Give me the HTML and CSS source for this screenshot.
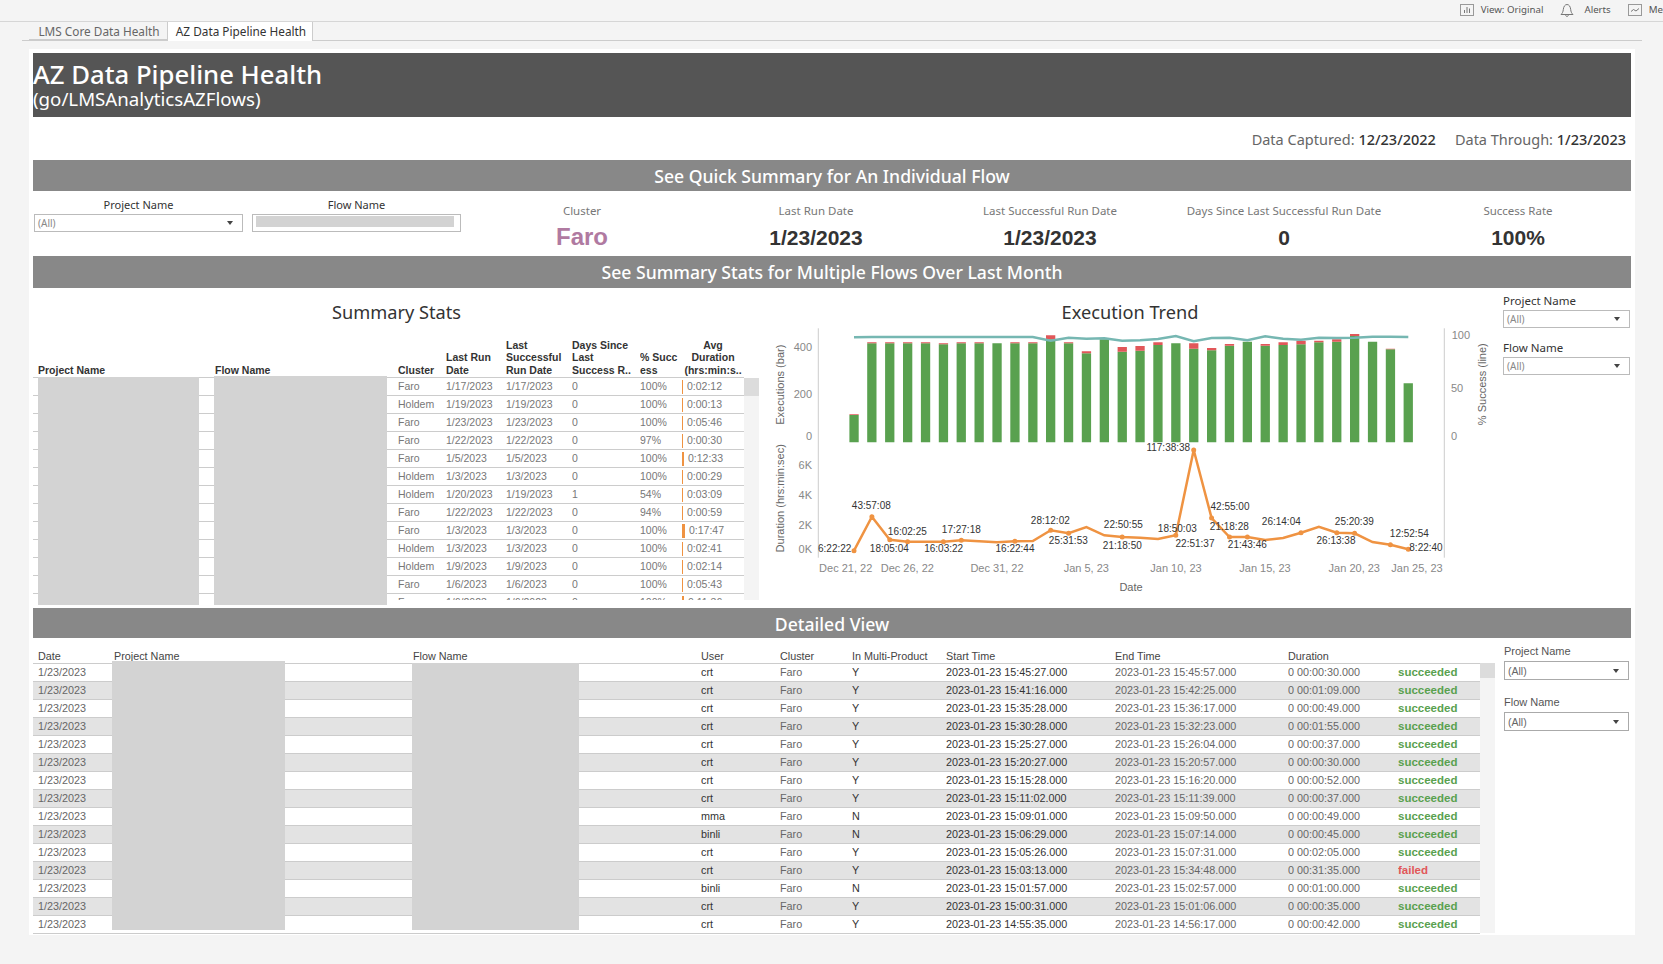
FILE: index.html
```html
<!DOCTYPE html>
<html lang="en">
<head>
    <meta charset="UTF-8">
    <title>AZ Data Pipeline Health</title>
    <link rel="stylesheet" href="styles.css">
</head>
<body>

    <div class="toolbar">
        <div class="tool">
            <svg width="14" height="12" viewBox="0 0 14 12"><rect x="0.5" y="0.5" width="13" height="11" fill="none" stroke="#999"/><path d="M4.5 9V6M7 9V3M9.5 9V4.5" stroke="#777" fill="none"/></svg>
            <span>View: Original</span>
        </div>
        <div class="tool tool-wide">
            <svg width="14" height="14" viewBox="0 0 14 14"><path d="M1 11.5c1.5-1.5 2-2.500 2.300-5C3.600 3.500 5 1.500 7 1.500s3.400 2 3.700 5c.3 2.500.8 3.500 2.300 5zM5.500 11.500c.2 1.300.8 2 1.500 2s1.300-.7 1.500-2" fill="none" stroke="#777"/></svg>
            <span>Alerts</span>
        </div>
        <div class="tool">
            <svg width="14" height="12" viewBox="0 0 14 12"><rect x="0.5" y="0.5" width="13" height="11" fill="none" stroke="#999"/><path d="M3 7.500l2.500-2 2.500 1.500 3-2.500" stroke="#777" fill="none"/></svg>
            <span>Me</span>
        </div>
    </div>

    <div class="tabs">
        <div class="tab">LMS Core Data Health</div>
        <div class="tab tab-active">AZ Data Pipeline Health</div>
    </div>

    <div class="dashboard">
        <div class="page-header">
            <h1>AZ Data Pipeline Health</h1>
            <div class="page-sub">(go/LMSAnalyticsAZFlows)</div>
        </div>

        <div class="meta">
            <span>Data Captured: <b>12/23/2022</b></span>
            <span>Data Through: <b>1/23/2023</b></span>
        </div>

        <div class="section-bar section-bar-first">See Quick Summary for An Individual Flow</div>

        <div class="quick">
            <div class="quick-filters">
                <div class="filter">
                    <div class="filter-label">Project Name</div>
                    <div class="dropdown"><span>(All)</span><i class="caret"></i></div>
                </div>
                <div class="filter">
                    <div class="filter-label">Flow Name</div>
                    <div class="dropdown dropdown-redacted"><span class="redact-inner"></span></div>
                </div>
            </div>
            <div class="stat">
                <div class="stat-label">Cluster</div>
                <div class="stat-value stat-pink">Faro</div>
            </div>
            <div class="stat">
                <div class="stat-label">Last Run Date</div>
                <div class="stat-value">1/23/2023</div>
            </div>
            <div class="stat">
                <div class="stat-label">Last Successful Run Date</div>
                <div class="stat-value">1/23/2023</div>
            </div>
            <div class="stat">
                <div class="stat-label">Days Since Last Successful Run Date</div>
                <div class="stat-value">0</div>
            </div>
            <div class="stat">
                <div class="stat-label">Success Rate</div>
                <div class="stat-value">100%</div>
            </div>
        </div>

        <div class="section-bar section-bar-tall">See Summary Stats for Multiple Flows Over Last Month</div>

        <div class="summary">
            <div class="summary-left">
                <h3 class="panel-title">Summary Stats</h3>
                <div class="summary-table-box">
                    <div class="summary-clip">
                        <table class="grid-table summary-table">
                            <colgroup>
                                <col class="s1"><col class="s2"><col class="s3"><col class="s4"><col class="s5"><col class="s6"><col class="s7"><col class="s8">
                            </colgroup>
                            <thead>
                                <tr>
                                    <th>Project Name</th>
                                    <th>Flow Name</th>
                                    <th>Cluster</th>
                                    <th>Last Run<br>Date</th>
                                    <th>Last<br>Successful<br>Run Date</th>
                                    <th>Days Since<br>Last<br>Success R..</th>
                                    <th>% Succ<br>ess</th>
                                    <th class="th-center">Avg<br>Duration<br>(hrs:min:s..</th>
                                </tr>
                            </thead>
                            <tbody>
                                <tr><td></td><td></td><td>Faro</td><td>1/17/2023</td><td>1/17/2023</td><td>0</td><td>100%</td><td><span class="dur-bar" style="width:1px"></span>0:02:12</td></tr>
                                <tr><td></td><td></td><td>Holdem</td><td>1/19/2023</td><td>1/19/2023</td><td>0</td><td>100%</td><td><span class="dur-bar" style="width:1px"></span>0:00:13</td></tr>
                                <tr><td></td><td></td><td>Faro</td><td>1/23/2023</td><td>1/23/2023</td><td>0</td><td>100%</td><td><span class="dur-bar" style="width:1px"></span>0:05:46</td></tr>
                                <tr><td></td><td></td><td>Faro</td><td>1/22/2023</td><td>1/22/2023</td><td>0</td><td>97%</td><td><span class="dur-bar" style="width:1px"></span>0:00:30</td></tr>
                                <tr><td></td><td></td><td>Faro</td><td>1/5/2023</td><td>1/5/2023</td><td>0</td><td>100%</td><td><span class="dur-bar" style="width:2px"></span>0:12:33</td></tr>
                                <tr><td></td><td></td><td>Holdem</td><td>1/3/2023</td><td>1/3/2023</td><td>0</td><td>100%</td><td><span class="dur-bar" style="width:1px"></span>0:00:29</td></tr>
                                <tr><td></td><td></td><td>Holdem</td><td>1/20/2023</td><td>1/19/2023</td><td>1</td><td>54%</td><td><span class="dur-bar" style="width:1px"></span>0:03:09</td></tr>
                                <tr><td></td><td></td><td>Faro</td><td>1/22/2023</td><td>1/22/2023</td><td>0</td><td>94%</td><td><span class="dur-bar" style="width:1px"></span>0:00:59</td></tr>
                                <tr><td></td><td></td><td>Faro</td><td>1/3/2023</td><td>1/3/2023</td><td>0</td><td>100%</td><td><span class="dur-bar" style="width:3px"></span>0:17:47</td></tr>
                                <tr><td></td><td></td><td>Holdem</td><td>1/3/2023</td><td>1/3/2023</td><td>0</td><td>100%</td><td><span class="dur-bar" style="width:1px"></span>0:02:41</td></tr>
                                <tr><td></td><td></td><td>Holdem</td><td>1/9/2023</td><td>1/9/2023</td><td>0</td><td>100%</td><td><span class="dur-bar" style="width:1px"></span>0:02:14</td></tr>
                                <tr><td></td><td></td><td>Faro</td><td>1/6/2023</td><td>1/6/2023</td><td>0</td><td>100%</td><td><span class="dur-bar" style="width:1px"></span>0:05:43</td></tr>
                                <tr><td></td><td></td><td>Faro</td><td>1/6/2023</td><td>1/6/2023</td><td>0</td><td>100%</td><td><span class="dur-bar" style="width:2px"></span>0:11:36</td></tr>
                            </tbody>
                        </table>
                    </div>
                    <div class="scroll-track summary-scroll"><div class="scroll-thumb"></div></div>
                    <div class="redact redact-s1"></div>
                    <div class="redact redact-s2"></div>
                </div>
            </div>

            <div class="summary-chart">
                <h3 class="panel-title">Execution Trend</h3>
                <svg class="trend" width="740" height="280" viewBox="0 40 740 280">
                    <path class="axis" d="M58.3 40.300V269.700M684.300 40.300V269.700"/>

                    <path class="bars-green" d="M89.4 127h9.300v27.300h-9.300zM107.200 55.300h9.300v99h-9.300zM125.100 55.300h9.300v99h-9.300zM143 55.300h9.300v99h-9.300zM160.900 55.300h9.300v99h-9.300zM178.800 56.300h9.300v98h-9.300zM196.600 55.300h9.300v99h-9.300zM214.500 55.300h9.300v99h-9.300zM232.400 55.300h9.300v99h-9.300zM250.300 55.300h9.300v99h-9.300zM268.200 55.300h9.300v99h-9.300zM286 51.300h9.300v103h-9.300zM303.900 55.300h9.300v99h-9.300zM321.800 65.300h9.300v89h-9.300zM339.700 51.300h9.300v103h-9.300zM357.600 63.700h9.300v90.600h-9.300zM375.400 62.700h9.300v91.600h-9.300zM393.300 57h9.300v97.300h-9.300zM411.200 55.300h9.300v99h-9.300zM429.100 60.700h9.300v93.600h-9.300zM447 62.300h9.300v92h-9.300zM464.800 57.700h9.300v96.600h-9.300zM482.700 53.700h9.300v100.600h-9.300zM500.600 57.700h9.300v96.600h-9.300zM518.500 57h9.300v97.300h-9.300zM536.400 56.300h9.300v98h-9.300zM554.200 54.300h9.300v100h-9.300zM572.100 53.700h9.300v100.600h-9.300zM590 48h9.300v106.300h-9.300zM607.900 53.700h9.300v100.600h-9.300zM625.800 61.300h9.300v93h-9.300zM643.600 95.300h9.300v59h-9.300z"/>
                    <path class="bars-red" d="M89.4 126.300h9.300v.7h-9.300zM107.200 54.300h9.300v1h-9.300zM125.100 54.300h9.300v1h-9.300zM143 54.300h9.300v1h-9.300zM160.900 54.300h9.300v1h-9.300zM178.800 55.300h9.300v1h-9.300zM196.600 54.300h9.300v1h-9.300zM214.500 54.300h9.300v1h-9.300zM250.300 54.300h9.300v1h-9.300zM268.200 54.300h9.300v1h-9.300zM286 47.300h9.300v4h-9.300zM303.900 54.300h9.300v1h-9.300zM321.800 63.300h9.300v2h-9.300zM357.600 59h9.300v4.700h-9.300zM375.400 58h9.300v4.700h-9.300zM393.300 54.300h9.300v2.700h-9.300zM429.100 55.300h9.300v5.400h-9.300zM447 60h9.300v2.300h-9.300zM464.800 56h9.300v1.700h-9.300zM500.600 56h9.300v1.700h-9.300zM518.500 54.300h9.300v2.700h-9.300zM536.400 52.700h9.300v3.600h-9.300zM554.200 52.700h9.300v1.600h-9.300zM572.100 51.300h9.300v2.400h-9.300zM590 46h9.300v2h-9.300zM625.800 60.700h9.300v.6h-9.300z"/>
                    <polyline class="line-teal" points="94,49.300 111.900,49 129.800,49 147.600,49 165.500,49 183.400,49 201.300,49 219.200,49 237,49 254.900,49 272.800,49 290.700,52.700 308.600,49.700 326.400,50.700 344.300,50.300 362.200,52.700 380.100,52.300 398,51 415.800,48 433.700,53.300 451.600,50 469.500,49.700 487.400,52.300 505.200,48.300 523.100,50.700 541,51.700 558.900,49.700 576.800,50 594.600,49.700 612.500,48.700 630.400,48.700 648.300,49"/>

                    <polyline class="line-orange" points="94,262.700 111.900,228.700 129.800,251.700 147.600,253.700 165.500,253.700 183.400,253.700 201.300,252.300 219.200,253.300 237,254.300 254.900,253.300 272.800,253 290.700,242.300 308.600,245.300 326.400,239 344.300,247.300 362.200,249 380.100,249.700 398,251 415.800,247.300 433.700,162 451.600,230 469.500,249 487.400,249 505.200,252 523.100,250 541,244.700 558.900,238.700 576.800,244.700 594.600,245.300 612.500,254 630.400,256.700 648.300,261.300"/>
                    <path class="dots-orange" d="M94 262.700h0M111.900 228.700h0M129.800 251.700h0M147.600 253.700h0M183.400 253.700h0M201.300 252.300h0M254.900 253.300h0M290.700 242.300h0M308.600 245.300h0M362.200 249h0M415.800 247.300h0M433.700 162h0M451.600 230h0M469.500 249h0M487.400 249h0M541 244.700h0M576.800 244.700h0M594.600 245.300h0M630.400 256.700h0M648.300 261.300h0"/>

                    <g class="tick tick-end">
                        <text x="52" y="62.700">400</text>
                        <text x="52" y="110.300">200</text>
                        <text x="52" y="152">0</text>
                        <text x="52" y="180.700">6K</text>
                        <text x="52" y="211">4K</text>
                        <text x="52" y="241">2K</text>
                        <text x="52" y="265.300">0K</text>
                    </g>
                    <g class="tick">
                        <text x="691.700" y="51">100</text>
                        <text x="691" y="104.300">50</text>
                        <text x="691" y="152">0</text>
                    </g>
                    <g class="tick tick-mid">
                        <text x="85.700" y="284.300">Dec 21, 22</text>
                        <text x="147.300" y="284.300">Dec 26, 22</text>
                        <text x="237" y="284.300">Dec 31, 22</text>
                        <text x="326.300" y="284.300">Jan 5, 23</text>
                        <text x="416" y="284.300">Jan 10, 23</text>
                        <text x="505" y="284.300">Jan 15, 23</text>
                        <text x="594.300" y="284.300">Jan 20, 23</text>
                        <text x="657" y="284.300">Jan 25, 23</text>
                    </g>
                    <text class="axis-title" x="371" y="303">Date</text>
                    <text class="axis-title" transform="translate(23.500 96.700) rotate(-90)">Executions (bar)</text>
                    <text class="axis-title" transform="translate(23.500 210.300) rotate(-90)">Duration (hrs:min:sec)</text>
                    <text class="axis-title" transform="translate(725.700 96.200) rotate(-90)">% Success (line)</text>

                    <g class="pt">
                        <text x="74.700" y="263.800">6:22:22</text>
                        <text x="111.300" y="221.200">43:57:08</text>
                        <text x="147.300" y="246.500">16:02:25</text>
                        <text x="129.300" y="263.800">18:05:04</text>
                        <text x="183.700" y="263.500">16:03:22</text>
                        <text x="201.300" y="244.500">17:27:18</text>
                        <text x="255" y="263.500">16:22:44</text>
                        <text x="290.300" y="235.500">28:12:02</text>
                        <text x="308.300" y="256.200">25:31:53</text>
                        <text x="363.300" y="239.800">22:50:55</text>
                        <text x="362.300" y="260.800">21:18:50</text>
                        <text x="417.300" y="243.500">18:50:03</text>
                        <text x="435" y="258.800">22:51:37</text>
                        <text x="408.300" y="163.200">117:38:38</text>
                        <text x="470" y="222.200">42:55:00</text>
                        <text x="469.300" y="241.800">21:18:28</text>
                        <text x="487.300" y="259.800">21:43:46</text>
                        <text x="521.300" y="237.200">26:14:04</text>
                        <text x="576" y="256.200">26:13:38</text>
                        <text x="594.300" y="237.200">25:20:39</text>
                        <text x="649.300" y="248.800">12:52:54</text>
                        <text x="666" y="262.500">8:22:40</text>
                    </g>
                </svg>
            </div>

            <div class="side-filters">
                <div class="filter">
                    <div class="filter-label filter-label-left">Project Name</div>
                    <div class="dropdown"><span>(All)</span><i class="caret"></i></div>
                </div>
                <div class="filter">
                    <div class="filter-label filter-label-left">Flow Name</div>
                    <div class="dropdown"><span>(All)</span><i class="caret"></i></div>
                </div>
            </div>
        </div>

        <div class="section-bar">Detailed View</div>

        <div class="detail">
            <div class="detail-table-box">
                <table class="grid-table detail-table">
                    <colgroup>
                        <col class="d1"><col class="d2"><col class="d3"><col class="d4"><col class="d5"><col class="d6"><col class="d7"><col class="d8"><col class="d9"><col class="d10">
                    </colgroup>
                    <thead>
                        <tr><th>Date</th><th>Project Name</th><th>Flow Name</th><th>User</th><th>Cluster</th><th>In Multi-Product</th><th>Start Time</th><th>End Time</th><th>Duration</th><th></th></tr>
                    </thead>
                    <tbody>
                        <tr><td>1/23/2023</td><td></td><td></td><td class="dark">crt</td><td>Faro</td><td class="dark">Y</td><td class="dark">2023-01-23 15:45:27.000</td><td>2023-01-23 15:45:57.000</td><td>0 00:00:30.000</td><td class="ok">succeeded</td></tr>
                        <tr><td>1/23/2023</td><td></td><td></td><td class="dark">crt</td><td>Faro</td><td class="dark">Y</td><td class="dark">2023-01-23 15:41:16.000</td><td>2023-01-23 15:42:25.000</td><td>0 00:01:09.000</td><td class="ok">succeeded</td></tr>
                        <tr><td>1/23/2023</td><td></td><td></td><td class="dark">crt</td><td>Faro</td><td class="dark">Y</td><td class="dark">2023-01-23 15:35:28.000</td><td>2023-01-23 15:36:17.000</td><td>0 00:00:49.000</td><td class="ok">succeeded</td></tr>
                        <tr><td>1/23/2023</td><td></td><td></td><td class="dark">crt</td><td>Faro</td><td class="dark">Y</td><td class="dark">2023-01-23 15:30:28.000</td><td>2023-01-23 15:32:23.000</td><td>0 00:01:55.000</td><td class="ok">succeeded</td></tr>
                        <tr><td>1/23/2023</td><td></td><td></td><td class="dark">crt</td><td>Faro</td><td class="dark">Y</td><td class="dark">2023-01-23 15:25:27.000</td><td>2023-01-23 15:26:04.000</td><td>0 00:00:37.000</td><td class="ok">succeeded</td></tr>
                        <tr><td>1/23/2023</td><td></td><td></td><td class="dark">crt</td><td>Faro</td><td class="dark">Y</td><td class="dark">2023-01-23 15:20:27.000</td><td>2023-01-23 15:20:57.000</td><td>0 00:00:30.000</td><td class="ok">succeeded</td></tr>
                        <tr><td>1/23/2023</td><td></td><td></td><td class="dark">crt</td><td>Faro</td><td class="dark">Y</td><td class="dark">2023-01-23 15:15:28.000</td><td>2023-01-23 15:16:20.000</td><td>0 00:00:52.000</td><td class="ok">succeeded</td></tr>
                        <tr><td>1/23/2023</td><td></td><td></td><td class="dark">crt</td><td>Faro</td><td class="dark">Y</td><td class="dark">2023-01-23 15:11:02.000</td><td>2023-01-23 15:11:39.000</td><td>0 00:00:37.000</td><td class="ok">succeeded</td></tr>
                        <tr><td>1/23/2023</td><td></td><td></td><td class="dark">mma</td><td>Faro</td><td class="dark">N</td><td class="dark">2023-01-23 15:09:01.000</td><td>2023-01-23 15:09:50.000</td><td>0 00:00:49.000</td><td class="ok">succeeded</td></tr>
                        <tr><td>1/23/2023</td><td></td><td></td><td class="dark">binli</td><td>Faro</td><td class="dark">N</td><td class="dark">2023-01-23 15:06:29.000</td><td>2023-01-23 15:07:14.000</td><td>0 00:00:45.000</td><td class="ok">succeeded</td></tr>
                        <tr><td>1/23/2023</td><td></td><td></td><td class="dark">crt</td><td>Faro</td><td class="dark">Y</td><td class="dark">2023-01-23 15:05:26.000</td><td>2023-01-23 15:07:31.000</td><td>0 00:02:05.000</td><td class="ok">succeeded</td></tr>
                        <tr><td>1/23/2023</td><td></td><td></td><td class="dark">crt</td><td>Faro</td><td class="dark">Y</td><td class="dark">2023-01-23 15:03:13.000</td><td>2023-01-23 15:34:48.000</td><td>0 00:31:35.000</td><td class="bad">failed</td></tr>
                        <tr><td>1/23/2023</td><td></td><td></td><td class="dark">binli</td><td>Faro</td><td class="dark">N</td><td class="dark">2023-01-23 15:01:57.000</td><td>2023-01-23 15:02:57.000</td><td>0 00:01:00.000</td><td class="ok">succeeded</td></tr>
                        <tr><td>1/23/2023</td><td></td><td></td><td class="dark">crt</td><td>Faro</td><td class="dark">Y</td><td class="dark">2023-01-23 15:00:31.000</td><td>2023-01-23 15:01:06.000</td><td>0 00:00:35.000</td><td class="ok">succeeded</td></tr>
                        <tr><td>1/23/2023</td><td></td><td></td><td class="dark">crt</td><td>Faro</td><td class="dark">Y</td><td class="dark">2023-01-23 14:55:35.000</td><td>2023-01-23 14:56:17.000</td><td>0 00:00:42.000</td><td class="ok">succeeded</td></tr>
                    </tbody>
                </table>
                <div class="scroll-track detail-scroll"><div class="scroll-thumb"></div></div>
                <div class="redact redact-d1"></div>
                <div class="redact redact-d2"></div>
            </div>

            <div class="detail-filters">
                <div class="filter">
                    <div class="filter-label filter-label-arial">Project Name</div>
                    <div class="dropdown dropdown-dark"><span>(All)</span><i class="caret"></i></div>
                </div>
                <div class="filter">
                    <div class="filter-label filter-label-arial">Flow Name</div>
                    <div class="dropdown dropdown-dark"><span>(All)</span><i class="caret"></i></div>
                </div>
            </div>
        </div>
    </div>

</body>
</html>
```

FILE: styles.css
```css
* {
    box-sizing: border-box;
}
body {
    margin: 0;
    width: 1663px;
    height: 964px;
    overflow: hidden;
    background-color: #f4f4f4;
    font-family: "Noto Sans", sans-serif;
    color: #333;
}

/* top chrome */
.toolbar {
    height: 22px;
    border-bottom: 1px solid #d6d6d6;
    display: flex;
    justify-content: flex-end;
    align-items: center;
    gap: 17px;
    font-size: 9.700px;
    color: #555;
    padding-bottom: 2px;
}
.tool {
    display: flex;
    align-items: center;
    gap: 7px;
}
.tool-wide {
    gap: 10px;
}
.tabs {
    margin-left: 22px;
    width: 1620px;
    height: 19px;
    padding-left: 7px;
    border-bottom: 1px solid #ccc;
    display: flex;
    font-size: 11.800px;
    line-height: 18px;
}
.tab {
    width: 138px;
    height: 19px;
    padding-left: 2px;
    text-align: center;
    color: #666;
    border-bottom: 2px solid #ccc;
}
.tab-active {
    width: 146px;
    color: #333;
    background: white;
    border: 1px solid #ccc;
    border-top: 0;
    border-bottom: 0;
}

/* dashboard sheet */
.dashboard {
    margin: 8px 0 0 29px;
    width: 1606px;
    height: 886px;
    padding: 4px 4px 0;
    background-color: white;
}
.page-header {
    height: 64px;
    background-color: #555;
    color: white;
    padding-top: 8px;
}
.page-header h1 {
    margin: 0;
    font-size: 25.700px;
    font-weight: 500;
    line-height: 28px;
}
.page-sub {
    font-size: 18.700px;
    line-height: 20px;
}
.meta {
    height: 43px;
    padding-right: 5px;
    display: flex;
    justify-content: flex-end;
    align-items: center;
    gap: 19px;
    font-size: 14.500px;
    color: #666;
}
.meta b {
    font-weight: 500;
    color: #333;
}
.section-bar {
    height: 30px;
    background-color: #888;
    color: white;
    text-align: center;
    font-size: 17.600px;
    font-weight: 500;
    line-height: 33px;
}
.section-bar-first {
    height: 31px;
}
.section-bar-tall {
    height: 32px;
}

/* quick summary row */
.quick {
    height: 65px;
    display: grid;
    grid-template-columns: 432px repeat(5, 234px);
}
.quick-filters {
    display: flex;
    gap: 9px;
    padding: 6px 0 0 1px;
}
.quick-filters .filter {
    width: 209px;
}
.filter-label {
    height: 16px;
    margin-bottom: 1px;
    font-size: 11px;
    line-height: 16px;
    text-align: center;
    color: #333;
}
.filter-label-left {
    text-align: left;
    font-size: 11.500px;
}
.filter-label-arial {
    text-align: left;
    height: 14px;
    margin-bottom: 3px;
    line-height: 14px;
    font-family: "Liberation Sans", Arial, sans-serif;
    font-size: 11px;
    color: #555;
}
.dropdown {
    height: 18px;
    border: 1px solid #bbb;
    padding: 0 9px 0 3px;
    display: flex;
    justify-content: space-between;
    align-items: center;
    font-size: 10px;
    color: #888;
}
.dropdown-redacted {
    padding: 1px 6px 5px 3px;
}
.redact-inner {
    flex: 1;
    height: 11px;
    background-color: #d3d3d3;
}
.dropdown-dark {
    height: 19px;
    border-color: #aaa;
    font-family: "Liberation Sans", Arial, sans-serif;
    font-size: 10.500px;
    color: #666;
}
.caret {
    width: 0;
    height: 0;
    border-left: 3px solid transparent;
    border-right: 3px solid transparent;
    border-top: 4px solid #444;
}
.stat {
    text-align: center;
    padding-top: 12px;
}
.stat-label {
    font-size: 11.500px;
    line-height: 16px;
    color: #777;
}
.stat-value {
    margin-top: 5px;
    font-family: "Liberation Sans", Arial, sans-serif;
    font-size: 21px;
    font-weight: bold;
    line-height: 28px;
    color: #333;
}
.stat-pink {
    margin-top: 4px;
    font-size: 24px;
    color: #b07aa1;
}

/* summary stats + chart */
.summary {
    height: 320px;
    display: grid;
    grid-template-columns: 727px 740px 1fr;
}
.panel-title {
    margin: 8px 0 0;
    height: 32px;
    font-size: 18.200px;
    font-weight: 400;
    line-height: 32px;
    text-align: center;
    color: #333;
}
.summary-table-box {
    position: relative;
    display: flex;
}
.summary-clip {
    width: 711px;
    height: 272px;
    overflow: hidden;
}
.grid-table {
    border-collapse: separate;
    border-spacing: 0;
    table-layout: fixed;
    font-family: "Liberation Sans", Arial, sans-serif;
}
.grid-table th,
.grid-table td {
    padding: 0;
    white-space: nowrap;
    overflow: hidden;
    text-align: left;
}
.grid-table th:first-child,
.grid-table td:first-child {
    padding-left: 5px;
}
.grid-table td {
    height: 18px;
    border-bottom: 1px solid #ccc;
    line-height: 17px;
}
.summary-table {
    width: 711px;
    font-size: 10.500px;
    color: #777;
}
.summary-table th {
    height: 50px;
    vertical-align: bottom;
    font-weight: bold;
    color: #333;
    line-height: 12.500px;
    padding-bottom: 1px;
    border-bottom: 1px solid #ccc;
}
.summary-table .th-center {
    text-align: center;
}
.s1 { width: 182px; }
.s2 { width: 183px; }
.s3 { width: 48px; }
.s4 { width: 60px; }
.s5 { width: 66px; }
.s6 { width: 68px; }
.s7 { width: 42px; }
.s8 { width: 62px; }
.dur-bar {
    display: inline-block;
    height: 14px;
    margin-right: 4px;
    vertical-align: middle;
    background-color: #ef9342;
}
.scroll-track {
    width: 15px;
    background-color: #f4f4f4;
}
.scroll-thumb {
    height: 18px;
    background-color: #dcdcdc;
}
.summary-scroll {
    height: 222px;
    margin-top: 50px;
}
.redact {
    position: absolute;
    background-color: #d3d3d3;
}
.redact-s1 {
    left: 5px;
    top: 49px;
    width: 161px;
    height: 228px;
}
.redact-s2 {
    left: 181px;
    top: 48px;
    width: 173px;
    height: 229px;
}

/* chart */
.trend {
    display: block;
}
.axis {
    stroke: #ccc;
    fill: none;
}
.bars-green {
    fill: #59a14f;
}
.bars-red {
    fill: #e15759;
}
.line-teal {
    fill: none;
    stroke: #76b7b2;
    stroke-width: 2.500;
}
.line-orange {
    fill: none;
    stroke: #ef9342;
    stroke-width: 2.500;
}
.dots-orange {
    fill: none;
    stroke: #ef9342;
    stroke-width: 5;
    stroke-linecap: round;
}
.trend text {
    font-family: "Liberation Sans", Arial, sans-serif;
}
.tick {
    font-size: 11px;
    fill: #888;
}
.tick-end {
    text-anchor: end;
}
.tick-mid {
    text-anchor: middle;
}
.axis-title {
    font-size: 11px;
    fill: #666;
    text-anchor: middle;
}
.pt {
    font-size: 10px;
    fill: #333;
    text-anchor: middle;
}
.side-filters {
    padding: 5px 1px 0 3px;
    display: flex;
    flex-direction: column;
    gap: 12px;
}

/* detailed view */
.detail {
    display: grid;
    grid-template-columns: 1471px 125px;
}
.detail-table-box {
    position: relative;
    display: flex;
    align-items: flex-start;
}
.detail-table {
    width: 1447px;
    font-size: 10.800px;
    color: #666;
}
.detail-table th {
    height: 26px;
    vertical-align: bottom;
    font-weight: normal;
    color: #444;
    line-height: 13px;
    padding-bottom: 0;
    border-bottom: 1px solid #ccc;
}
.detail-table tbody tr:nth-child(even) td {
    background-color: #e3e3e3;
}
.detail-table .dark {
    color: #333;
}
.detail-table .ok,
.detail-table .bad {
    font-size: 11.500px;
    font-weight: bold;
    color: #59a14f;
}
.detail-table .bad {
    color: #e15759;
}
.d1 { width: 81px; }
.d2 { width: 299px; }
.d3 { width: 288px; }
.d4 { width: 79px; }
.d5 { width: 72px; }
.d6 { width: 94px; }
.d7 { width: 169px; }
.d8 { width: 173px; }
.d9 { width: 110px; }
.d10 { width: 82px; }
.detail-scroll {
    height: 270px;
    margin-top: 25px;
}
.detail-scroll .scroll-thumb {
    height: 15px;
}
.redact-d1 {
    left: 79px;
    top: 23px;
    width: 173px;
    height: 269px;
}
.redact-d2 {
    left: 379px;
    top: 25px;
    width: 167px;
    height: 267px;
}
.detail-filters {
    padding-top: 6px;
    display: flex;
    flex-direction: column;
    gap: 15px;
}
```
